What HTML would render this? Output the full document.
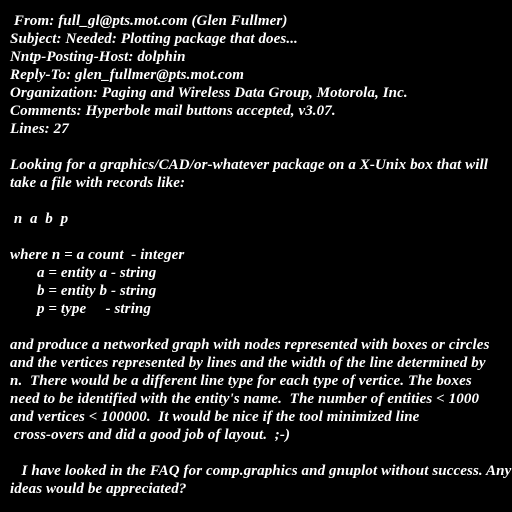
<!DOCTYPE html>
<html><head><style>
html,body{margin:0;padding:0;background:#000;width:512px;height:512px;overflow:hidden}
pre{position:absolute;left:10px;top:12px;margin:0;color:#fff;font:italic bold 15px/18px "Liberation Serif",serif;letter-spacing:0.1px;white-space:pre}
</style></head><body>
<pre> From: full_gl@pts.mot.com (Glen Fullmer)
Subject: Needed: Plotting package that does...
Nntp-Posting-Host: dolphin
Reply-To: glen_fullmer@pts.mot.com
Organization: Paging and Wireless Data Group, Motorola, Inc.
Comments: Hyperbole mail buttons accepted, v3.07.
Lines: 27

Looking for a graphics/CAD/or-whatever package on a X-Unix box that will
take a file with records like:

 n  a  b  p

where n = a count  - integer
       a = entity a - string
       b = entity b - string
       p = type     - string

and produce a networked graph with nodes represented with boxes or circles
and the vertices represented by lines and the width of the line determined by
n.  There would be a different line type for each type of vertice. The boxes
need to be identified with the entity's name.  The number of entities &lt; 1000
and vertices &lt; 100000.  It would be nice if the tool minimized line
 cross-overs and did a good job of layout.  ;-)

   I have looked in the FAQ for comp.graphics and gnuplot without success. Any
ideas would be appreciated?</pre>
</body></html>
